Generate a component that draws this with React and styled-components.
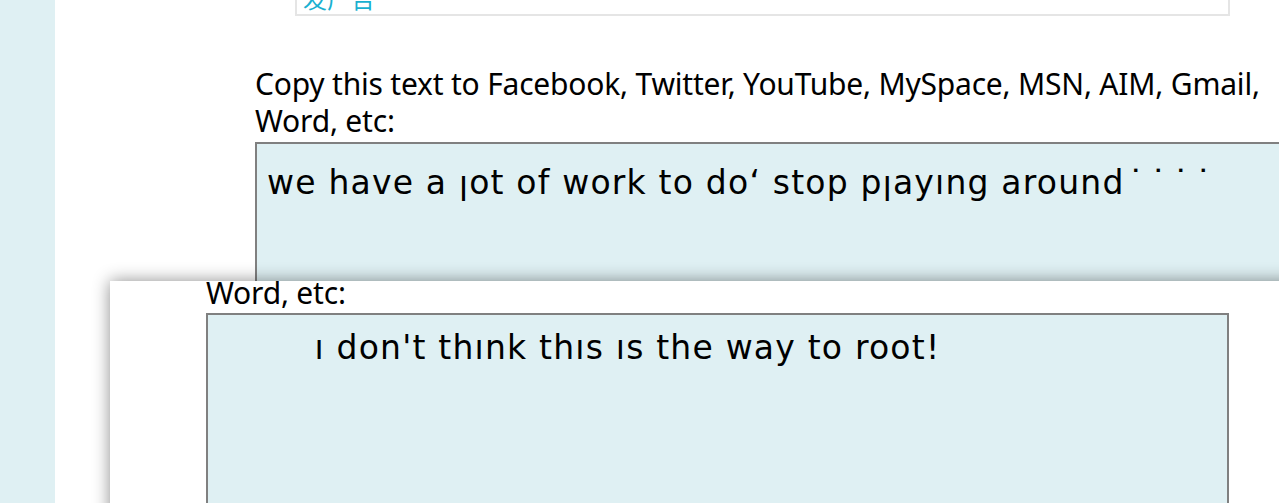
import React from "react";
import styled, { createGlobalStyle } from "styled-components";

const GlobalStyle = createGlobalStyle`
  html, body {
    margin: 0;
    padding: 0;
    background: #ffffff;
    overflow: hidden;
  }
  body {
    font-family: "Noto Sans", "Open Sans", sans-serif;
  }
`;

const Page = styled.div`
  position: relative;
  display: flex;
  width: 1279px;
  height: 503px;
  overflow: hidden;
`;

const Sidebar = styled.div`
  flex: 0 0 55px;
  background: #dff0f3;
`;

const Main = styled.div`
  flex: 1;
  display: flex;
  flex-direction: column;
  padding-left: 200px;
`;

const AdBox = styled.div`
  margin-left: 40px;
  width: 935px;
  height: 60px;
  margin-top: -44px;
  border: 2px solid #e5e5e5;
  display: flex;
  align-items: flex-end;
  padding: 0 6px 4px;
  box-sizing: border-box;
`;

const AdLink = styled.a`
  color: #1ab0d0;
  font-family: "Noto Sans CJK SC", sans-serif;
  font-size: 24px;
  line-height: 1;
  text-decoration: none;
`;

const Label = styled.div`
  margin-top: 49px;
  margin-bottom: 3px;
  font-size: 30px;
  line-height: 37px;
  color: #000;
  font-family: "Noto Sans", sans-serif;
  letter-spacing: -0.2px;
`;

const TextBox = styled.div`
  box-sizing: border-box;
  width: ${(p) => p.$w}px;
  height: ${(p) => p.$h}px;
  flex: 0 0 auto;
  border: 2px solid #808080;
  background: #dff0f3;
  color: #000;
  font-family: "DejaVu Sans", Verdana, sans-serif;
  font-size: 33px;
  line-height: 36px;
  letter-spacing: 1.2px;
  padding: ${(p) => p.$pad};
  white-space: pre;
  overflow: hidden;
`;

const Dots = styled.span`
  margin-left: 3px;
  letter-spacing: 6px;
`;

const Popup = styled.div`
  position: absolute;
  left: 110px;
  top: 281px;
  right: -20px;
  bottom: -20px;
  background: #ffffff;
  box-shadow: 0 0 16px rgba(0, 0, 0, 0.45);
  padding-left: 96px;
  display: flex;
  flex-direction: column;
`;

const PopupLabel = styled(Label)`
  margin-top: -4px;
  margin-bottom: 4px;
  line-height: 32px;
`;

export default function App() {
  return (
    <>
      <GlobalStyle />
      <Page>
        <Sidebar />
        <Main>
          <AdBox>
            <AdLink href="#">发广告</AdLink>
          </AdBox>
          <Label>
            Copy this text to Facebook, Twitter, YouTube, MySpace, MSN, AIM, Gmail,
            <br />
            Word, etc:
          </Label>
          <TextBox $w={1040} $h={200} $pad="21px 10px">
            {"we have a ןot of work to do‘ stop pןayıng around"}
            <Dots>˙˙˙˙</Dots>
          </TextBox>
        </Main>
        <Popup>
          <PopupLabel>Word, etc:</PopupLabel>
          <TextBox $w={1023} $h={220} $pad="15px 10px 15px 13px">
            {"        ı don't thınk thıs ıs the way to root!"}
          </TextBox>
        </Popup>
      </Page>
    </>
  );
}
